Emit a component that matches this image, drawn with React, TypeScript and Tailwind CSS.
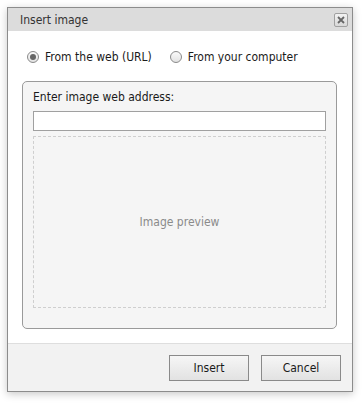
import { useState } from "react";

const font = { fontFamily: '"DejaVu Sans Condensed", "Liberation Sans", sans-serif' };

function Radio({ checked, label, onClick }: { checked: boolean; label: string; onClick: () => void }) {
  return (
    <label className="flex items-center gap-[6px] cursor-pointer" onClick={onClick}>
      <span className="w-[12px] h-[12px] rounded-full border border-[#8a8a8a] bg-gradient-to-b from-[#fafafa] to-[#e2e2e2] flex items-center justify-center">
        {checked && <span className="w-[6px] h-[6px] rounded-full bg-[#666]" />}
      </span>
      <span className="text-[12px] text-[#1a1a1a] leading-[16px]">{label}</span>
    </label>
  );
}

export default function App() {
  const [source, setSource] = useState<"web" | "computer">("web");
  const [url, setUrl] = useState("");

  return (
    <div className="w-[362px] h-[404px] bg-white pt-[7px] pl-[7px]" style={font}>
      <div className="w-[346px] h-[385px] border border-[#8c8c8c] bg-white flex flex-col shadow-[0_2px_8px_rgba(0,0,0,0.22)]">
        <div className="h-[23px] bg-[#dcdcdc] flex items-center justify-between pl-[12px] pr-[4px]">
          <span className="text-[12px] text-[#333] leading-[16px]">Insert image</span>
          <button className="w-[14px] h-[14px] rounded-[2px] border border-[#a0a0a0] bg-gradient-to-b from-[#f2f2f2] to-[#d8d8d8] flex items-center justify-center">
            <svg width="8" height="8" viewBox="0 0 8 8">
              <path d="M1 1L7 7M7 1L1 7" stroke="#666" strokeWidth="1.8" />
            </svg>
          </button>
        </div>

        <div className="flex-1 flex flex-col px-[14px]">
          <div className="flex items-center gap-[18px] h-[50px] pl-[5px] pt-[1px]">
            <Radio checked={source === "web"} label="From the web (URL)" onClick={() => setSource("web")} />
            <Radio checked={source === "computer"} label="From your computer" onClick={() => setSource("computer")} />
          </div>

          <div className="w-[315px] border border-[#9a9a9a] rounded-[5px] bg-[#f5f5f5] pt-[7px] pl-[10px] pr-[9px] pb-[20px] flex flex-col">
            <div className="text-[12px] text-[#1a1a1a] leading-[16px] mb-[6px]">Enter image web address:</div>
            <input
              value={url}
              onChange={(e) => setUrl(e.target.value)}
              className="w-[293px] h-[20px] border border-[#a0a0a0] bg-white outline-none px-[3px] text-[12px]"
            />
            <div className="mt-[5px] w-[293px] h-[172px] border border-dashed border-[#cfcfcf] flex items-center justify-center">
              <span className="text-[12px] text-[#8a8a8a]">Image preview</span>
            </div>
          </div>
        </div>

        <div className="h-[48px] bg-[#f2f2f2] border-t border-[#dedede] flex items-center justify-end gap-[12px] pr-[11px]">
          <button className="w-[80px] h-[26px] border border-[#8a8a8a] bg-gradient-to-b from-[#f6f6f6] to-[#e2e2e2] text-[12px] text-[#1a1a1a]">
            Insert
          </button>
          <button className="w-[80px] h-[26px] border border-[#8a8a8a] bg-gradient-to-b from-[#f6f6f6] to-[#e2e2e2] text-[12px] text-[#1a1a1a]">
            Cancel
          </button>
        </div>
      </div>
    </div>
  );
}
